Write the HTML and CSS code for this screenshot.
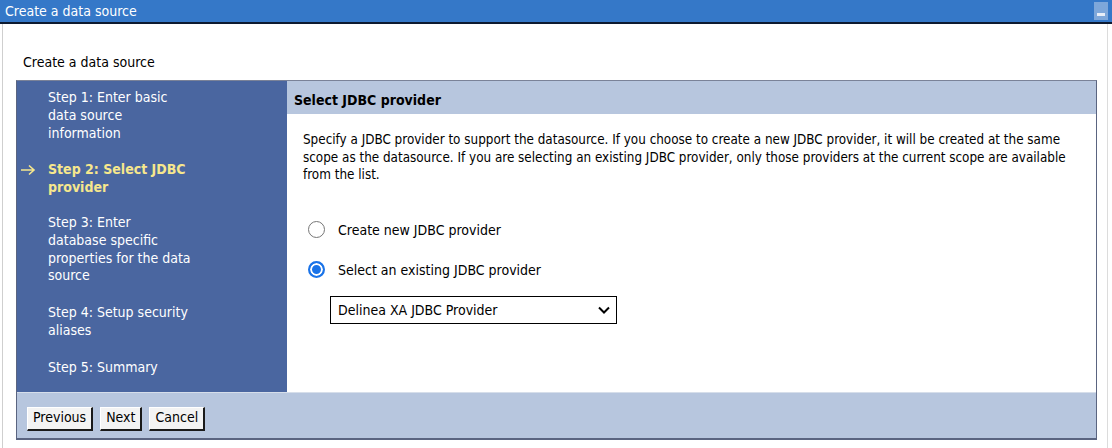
FILE: index.html
```html
<!DOCTYPE html>
<html>
<head>
<meta charset="utf-8">
<link rel="stylesheet" href="styles.css">
</head>
<body>
<div class="window">
  <div class="titlebar">
    <span class="title">Create a data source</span>
    <span class="minbtn"><span class="minbar"></span></span>
  </div>
  <div class="frame">
    <div class="pagehead">Create a data source</div>
    <div class="wizard">
      <div class="wizmain">
        <div class="nav">
          <div class="step">Step 1: Enter basic data source information</div>
          <div class="step current"><svg class="arrow" width="16" height="12" viewBox="0 0 16 12"><path d="M1 6 H14 M9 1.5 L14 6 L9 10.5" fill="none" stroke="#f6e78d" stroke-width="1.6"/></svg>Step 2: Select JDBC provider</div>
          <div class="step">Step 3: Enter<br>database specific properties for the data source</div>
          <div class="step">Step 4: Setup security aliases</div>
          <div class="step">Step 5: Summary</div>
        </div>
        <div class="content">
          <div class="chead">Select JDBC provider</div>
          <div class="cbody">
            <p class="desc">Specify a JDBC provider to support the datasource. If you choose to create a new JDBC provider, it will be created at the same scope as the datasource. If you are selecting an existing JDBC provider, only those providers at the current scope are available from the list.</p>
            <div class="option first">
              <span class="radio"></span>
              <span class="olabel">Create new JDBC provider</span>
            </div>
            <div class="option">
              <span class="radio checked"></span>
              <span class="olabel">Select an existing JDBC provider</span>
            </div>
            <div class="select">
              <span>Delinea XA JDBC Provider</span>
              <svg class="chev" width="14" height="10" viewBox="0 0 14 10"><path d="M2 2.5 L7 7.5 L12 2.5" fill="none" stroke="#000" stroke-width="2"/></svg>
            </div>
          </div>
        </div>
      </div>
      <div class="buttons">
        <span class="btn">Previous</span>
        <span class="btn">Next</span>
        <span class="btn">Cancel</span>
      </div>
    </div>
  </div>
</div>
</body>
</html>
```
FILE: styles.css
```css
* { box-sizing: border-box; }
html, body { margin: 0; padding: 0; background: #fff; }
body {
  width: 1112px;
  height: 448px;
  overflow: hidden;
  font-family: "DejaVu Sans Condensed", "DejaVu Sans", sans-serif;
  font-size: 13px;
  color: #000;
}
.window { width: 1112px; height: 448px; }
.titlebar {
  height: 24px;
  background: #3578c8;
  border-bottom: 2px solid #0d1a30;
  display: flex;
  align-items: center;
  justify-content: space-between;
  padding: 0 2px 0 5px;
}
.title { color: #fff; font-size: 14px; line-height: 20px; }
.minbtn {
  width: 14px; height: 18px;
  background: #7ea7da;
  display: flex; align-items: flex-end; justify-content: center;
  padding-bottom: 4px;
  margin-right: 2px;
}
.minbar { width: 8px; height: 3px; background: #e8eef8; }
.frame {
  margin: 0 4px 0 2px;
  height: 424px;
  border-left: 1px solid #cfcfcf;
  border-right: 1px solid #dcdcdc;
  padding: 0 0 0 13px;
}
.pagehead {
  font-size: 14px;
  padding: 30px 0 0 7px;
  height: 56px;
  line-height: 16px;
}
.wizard {
  width: 1081px;
  border: 1px solid #5a6480;
  border-top-color: #7a8298;
  border-bottom: 2px solid #5a6480;
}
.wizmain { display: flex; height: 311px; }
.nav {
  width: 270px;
  background: #4a66a0;
  padding: 8px 0 0 0;
  flex: none;
}
.step {
  color: #fff;
  font-size: 14px;
  line-height: 17.8px;
  padding-left: 31px;
  width: 178px;
  margin-bottom: 19px;
  position: relative;
}
.step.current { color: #f6e78d; font-weight: bold; margin-bottom: 17px; }
.arrow {
  position: absolute;
  left: 3px;
  top: 3px;
}
.content { flex: 1; background: #fff; }
.chead {
  background: #b7c6de;
  font-weight: bold;
  font-size: 14px;
  height: 33px;
  line-height: 20px;
  padding: 9px 0 0 7px;
}
.cbody { padding: 17px 0 0 16px; }
.desc {
  margin: 0;
  font-size: 13.35px;
  line-height: 17.5px;
  width: 775px;
}
.option {
  display: flex;
  align-items: center;
  height: 40px;
  padding-left: 5px;
}
.option.first { margin-top: 26px; }
.radio {
  width: 17px; height: 17px;
  border-radius: 50%;
  border: 1px solid #767676;
  background: #fff;
  margin-right: 13px;
  flex: none;
}
.radio.checked {
  border: 2px solid #1a73e8;
  box-shadow: inset 0 0 0 2px #fff;
  background: #1a73e8;
}
.olabel { font-size: 14px; }
.select {
  margin: 6px 0 0 27px;
  width: 287px;
  height: 28px;
  border: 1px solid #000;
  display: flex;
  align-items: center;
  justify-content: space-between;
  padding: 0 5px 0 7px;
  font-size: 14px;
}
.buttons {
  background: #b7c6de;
  height: 46px;
  border-top: 1px solid #d6deea;
  display: flex;
  align-items: center;
  gap: 7px;
  padding-left: 10px;
  padding-top: 7px;
}
.btn {
  background: #f3f3f3;
  border: 1px solid #fff;
  border-right: 2px solid #1a1a1a;
  border-bottom: 2px solid #1a1a1a;
  font-size: 14px;
  line-height: 19px;
  padding: 0 5px;
  height: 24px;
}
```
